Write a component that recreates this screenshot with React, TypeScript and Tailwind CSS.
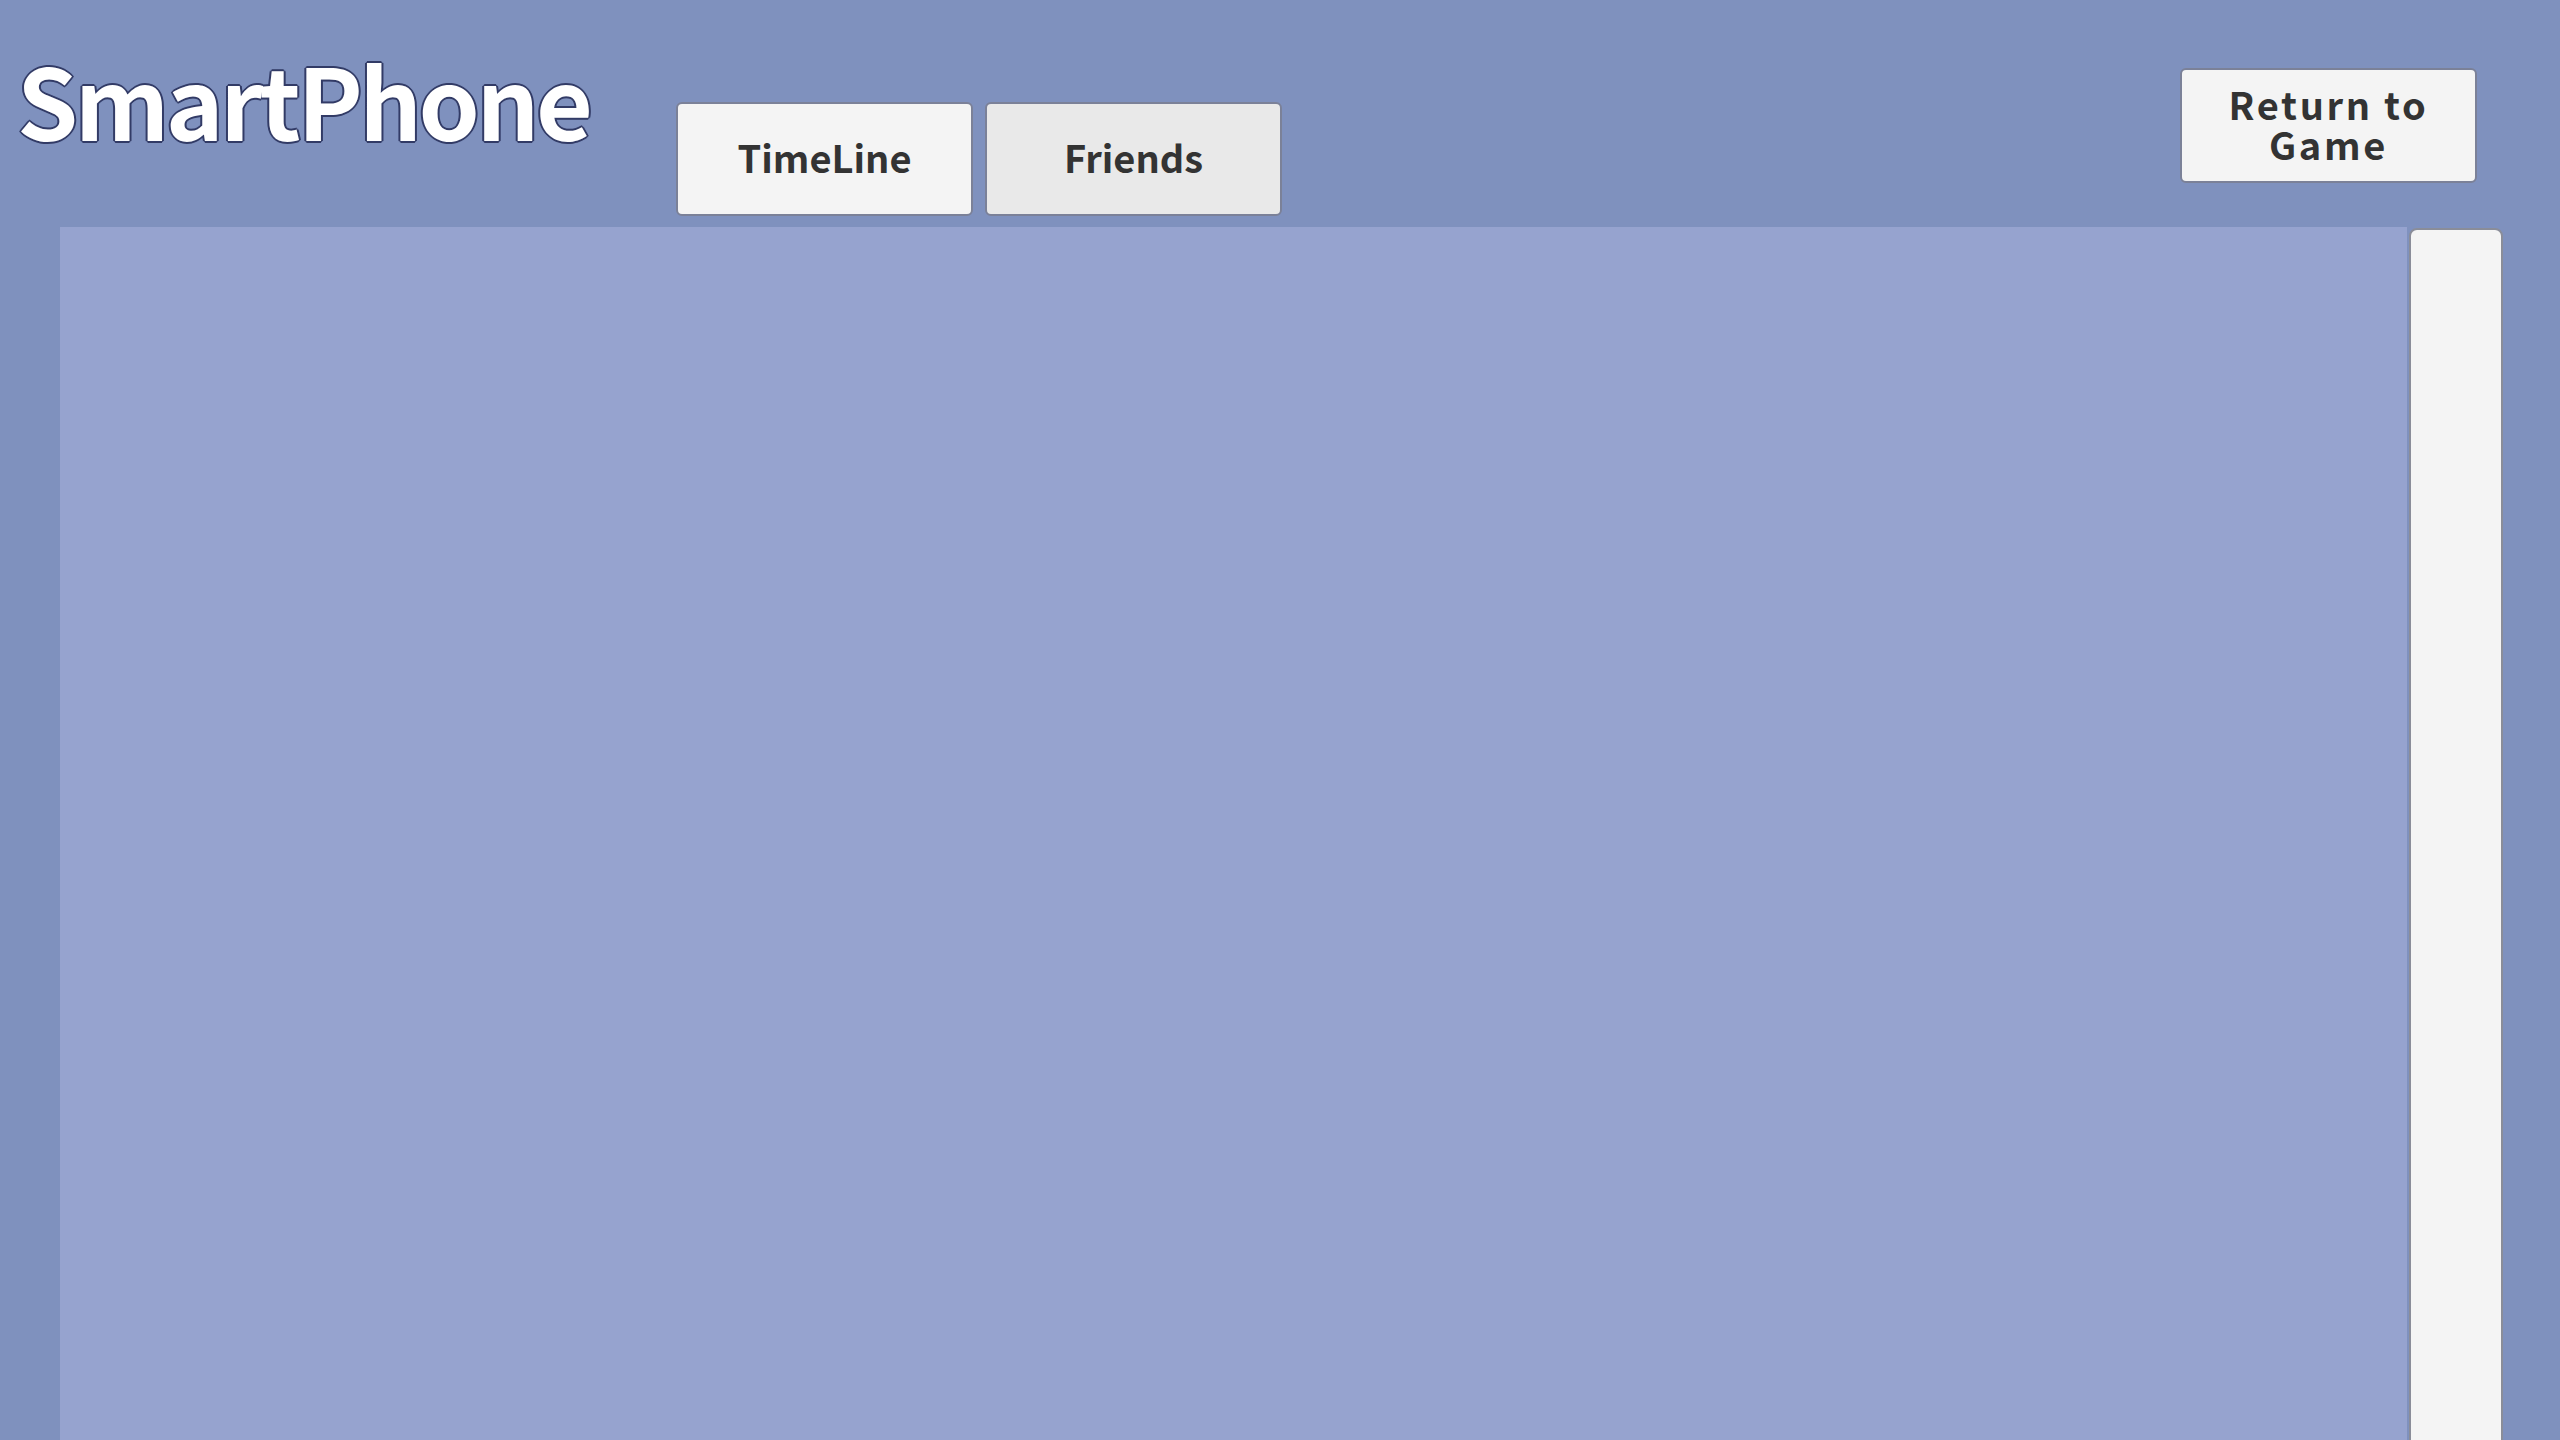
import React from "react";

const font = { fontFamily: '"Noto Sans CJK JP", "Noto Sans", sans-serif' };

export default function App() {
  return (
    <div
      className="w-[2560px] h-[1440px] overflow-hidden bg-[#7f91be] flex flex-col"
      style={font}
    >
      <div className="h-[227px] flex items-start shrink-0">
        <div className="pl-[17px] pt-[40px] w-[676px] shrink-0">
          <h1 className="text-[98px] leading-[1.2] font-bold tracking-[-0.035em] text-white [text-shadow:2px_0_0_#323b66,-2px_0_0_#323b66,0_2px_0_#323b66,0_-2px_0_#323b66,1px_1px_1px_#323b66,-1px_-1px_1px_#323b66,1px_-1px_1px_#323b66,-1px_1px_1px_#323b66]">
            SmartPhone
          </h1>
        </div>
        <div className="flex gap-[12px] mt-[102px]">
          <button className="w-[297px] h-[114px] rounded-[6px] border-2 border-[#7b8198] bg-[#f4f4f4] text-[#333333] text-[38px] font-bold pb-[6px]">
            TimeLine
          </button>
          <button className="w-[297px] h-[114px] rounded-[6px] border-2 border-[#7b8198] bg-[#e9e9e9] text-[#333333] text-[38px] font-bold pb-[6px]">
            Friends
          </button>
        </div>
        <div className="flex-1" />
        <button className="mt-[68px] mr-[83px] w-[297px] h-[115px] rounded-[6px] border-2 border-[#7b8198] bg-[#f4f4f4] text-[#333333] text-[38px] leading-[40px] font-bold tracking-[0.07em] pb-[4px] flex flex-col items-center justify-center">
          <span className="block">Return to</span>
          <span className="block">Game</span>
        </button>
      </div>
      <div className="flex-1 flex pl-[60px] pr-[57px]">
        <div className="flex-1 bg-[#96a3cf]" />
        <div className="w-[94px] mt-[1px] ml-[2px] -mb-[20px] rounded-t-[8px] border-2 border-[#8a8d99] bg-[#f4f4f4]" />
      </div>
    </div>
  );
}
